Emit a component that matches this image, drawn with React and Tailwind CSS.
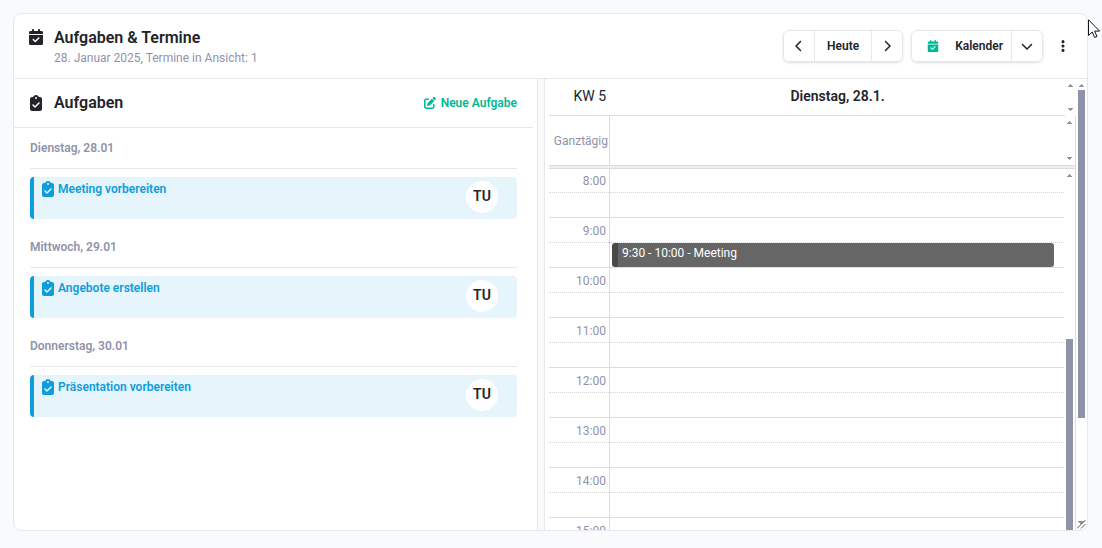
import {
  FaCalendarCheck,
  FaChevronDown,
  FaChevronLeft,
  FaChevronRight,
  FaClipboardCheck,
  FaEllipsisVertical,
  FaPenToSquare
} from 'react-icons/fa6';

const taskDays = [
  { label: 'Dienstag, 28.01', tasks: [{ title: 'Meeting vorbereiten', user: 'TU' }] },
  { label: 'Mittwoch, 29.01', tasks: [{ title: 'Angebote erstellen', user: 'TU' }] },
  { label: 'Donnerstag, 30.01', tasks: [{ title: 'Präsentation vorbereiten', user: 'TU' }] }
];

const hours = [8, 9, 10, 11, 12, 13, 14, 15];

const events = { 9: '9:30 - 10:00 - Meeting' };

function ScrollArrow({ down = false }) {
  return (
    <svg
      aria-hidden="true"
      width="5"
      height="3"
      viewBox="0 0 5 3"
      shapeRendering="crispEdges"
      className={down ? 'rotate-180' : ''}
    >
      <path d="M2 0h1v1h1v1h1v1H0V2h1V1h1z" fill="#8f93aa" />
    </svg>
  );
}

function Toolbar() {
  return (
    <div className="flex items-center text-xs font-semibold">
      <div className="flex h-8 rounded-md border border-[#e6e7eb] shadow-sm">
        <button type="button" aria-label="Zurück" className="flex w-[30px] items-center justify-center">
          <FaChevronLeft size={12} />
        </button>
        <button type="button" className="w-[58px] border-x border-[#e6e7eb]">
          Heute
        </button>
        <button type="button" aria-label="Weiter" className="flex w-[30px] items-center justify-center">
          <FaChevronRight size={12} />
        </button>
      </div>

      <div className="ml-2 flex h-8 rounded-md border border-[#e6e7eb] shadow-sm">
        <button type="button" className="flex items-center gap-4 pr-2 pl-[15px]">
          <FaCalendarCheck size={12} className="text-[#00b894]" />
          Kalender
        </button>
        <button
          type="button"
          aria-label="Ansicht wählen"
          className="flex w-[31px] items-center justify-center border-l border-[#e6e7eb]"
        >
          <FaChevronDown size={12} />
        </button>
      </div>

      <button type="button" aria-label="Mehr" className="ml-2 flex h-8 w-6 items-center justify-center">
        <FaEllipsisVertical size={14} />
      </button>
    </div>
  );
}

function TaskPanel() {
  return (
    <section className="min-w-0 overflow-hidden">
      <div className="mr-1 flex h-[49px] items-center border-b border-[#e6e7eb] pr-4 pl-[14px]">
        <FaClipboardCheck size={16} />
        <h2 className="ml-[10px] flex-1 text-base font-semibold">Aufgaben</h2>
        <a href="#neu" className="flex items-center gap-[5px] text-xs font-semibold text-[#00b894]">
          <FaPenToSquare size={12} />
          Neue Aufgabe
        </a>
      </div>

      <div className="mr-1 flex flex-col gap-2 px-4">
        {taskDays.map((day) => (
          <div key={day.label}>
            <h3 className="mb-2 h-[41px] border-b border-[#e6e7eb] text-xs leading-10 font-semibold text-[#8f93aa]">
              {day.label}
            </h3>
            {day.tasks.map((task) => (
              <div
                key={task.title}
                className="flex h-[42px] justify-between rounded-sm border-l-4 border-[#0d9ddb] bg-[#e6f4fc] py-1 pr-[19px] pl-[6px]"
              >
                <div className="flex h-4 items-center gap-[2px] text-xs font-semibold text-[#0d9ddb]">
                  <FaClipboardCheck size={16} />
                  {task.title}
                </div>
                <span className="flex size-8 items-center justify-center rounded-full bg-white pb-[2px] text-sm font-semibold">
                  {task.user}
                </span>
              </div>
            ))}
          </div>
        ))}
      </div>
    </section>
  );
}

function DayCalendar() {
  return (
    <div className="flex min-w-0 flex-1 flex-col">
      <div className="flex h-[37px] shrink-0">
        <div className="flex flex-1 items-center border-b border-[#dddddd] pb-[2px] text-sm">
          <div className="w-[61px] pr-1 text-right">KW 5</div>
          <div className="flex-1 text-center font-semibold">Dienstag, 28.1.</div>
        </div>
        <div className="flex w-[11px] flex-col items-center justify-between py-[5px]">
          <ScrollArrow />
          <ScrollArrow down />
        </div>
      </div>

      <div className="flex min-h-0 flex-1 flex-col border-r border-[#dddddd]">
        <div className="flex h-[49px] shrink-0">
          <div className="w-[61px] border-r border-[#dddddd] pr-px text-right text-xs leading-[50px] text-[#8f93aa]">
            Ganztägig
          </div>
          <div className="flex-1" />
          <div className="flex w-[11px] flex-col items-center justify-between py-[5px]">
            <ScrollArrow />
            <ScrollArrow down />
          </div>
        </div>
        <div className="h-1 shrink-0 border-y border-[#dddddd] bg-[#eeeeee]" />

        <div className="flex min-h-0 flex-1">
          <div className="-mt-px min-w-0 flex-1 overflow-hidden">
            {hours.map((hour) => (
              <div key={hour} className="flex h-[50px]">
                <div className="w-[61px] border-r border-[#dddddd]">
                  <div className="h-[25px] border-b border-dotted border-[#d5d5d5] pr-[3px] text-right text-xs leading-[26px] text-[#8f93aa]">
                    {hour}:00
                  </div>
                  <div className="h-[25px] border-b border-[#dddddd]" />
                </div>
                <div className="relative flex-1">
                  <div className="h-[25px] border-b border-dotted border-[#d5d5d5]" />
                  <div className="h-[25px] border-b border-[#dddddd]" />
                  {events[hour] && (
                    <div className="absolute top-[25px] right-[10px] left-[2px] h-6 rounded-[3px] border-l-6 border-[#4a4a4a] bg-[#666666] pl-1 text-xs leading-5 text-white">
                      {events[hour]}
                    </div>
                  )}
                </div>
              </div>
            ))}
          </div>
          <div className="flex w-[11px] flex-col items-center justify-between pt-[5px]">
            <ScrollArrow />
            <div className="h-[191px] w-[7px] bg-[#8f93aa]" />
          </div>
        </div>
      </div>
    </div>
  );
}

export default function App() {
  return (
    <main className="h-screen bg-[#f9fafc] pt-[13px] pr-[14px] pb-[17px] pl-[13px] font-['Roboto',sans-serif] text-[#222428]">
      <div className="relative flex h-full flex-col rounded-lg border border-[#e6e7eb] bg-white">
        <header className="flex h-[65px] shrink-0 items-center justify-between border-b border-[#e6e7eb] pr-3 pl-[14px]">
          <div className="flex gap-[10px]">
            <FaCalendarCheck size={16} className="mt-[3px]" />
            <div>
              <h1 className="text-base leading-6 font-semibold">Aufgaben &amp; Termine</h1>
              <p className="text-xs text-[#8f93aa]">28. Januar 2025, Termine in Ansicht: 1</p>
            </div>
          </div>
          <Toolbar />
        </header>

        <div className="grid min-h-0 flex-1 grid-cols-[523fr_8px_542fr]">
          <TaskPanel />
          <div className="border-x border-[#e6e7eb] bg-[#f9fafc]" />
          <section className="flex min-h-0 min-w-0 overflow-hidden pl-1">
            <DayCalendar />
            <div className="relative flex w-[11px] flex-col items-center pt-[5px]">
              <ScrollArrow />
              <div className="mt-[3px] h-[328px] w-[7px] bg-[#8f93aa]" />
              <svg
                aria-hidden="true"
                width="9"
                height="9"
                viewBox="0 0 9 9"
                className="absolute right-[1px] bottom-[1px]"
              >
                <path d="M1 1h6v1H6v1H5v1H3V3H2V2H1z" fill="#8f93aa" shapeRendering="crispEdges" />
                <path d="M0 8.500L8.500 0M4 8.500L8.500 4" stroke="#5a5a5a" />
              </svg>
            </div>
          </section>
        </div>

        {/* mouse pointer */}
        <svg
          aria-hidden="true"
          width="12"
          height="20"
          viewBox="0 0 12 20"
          className="absolute top-[5px] -right-[13px]"
        >
          <path
            d="M.5 .8v15.700l3.700-3.500 2.500 5.500 2.300-1-2.400-5.400h5z"
            fill="#fff"
            stroke="#111122"
          />
        </svg>
      </div>
    </main>
  );
}
